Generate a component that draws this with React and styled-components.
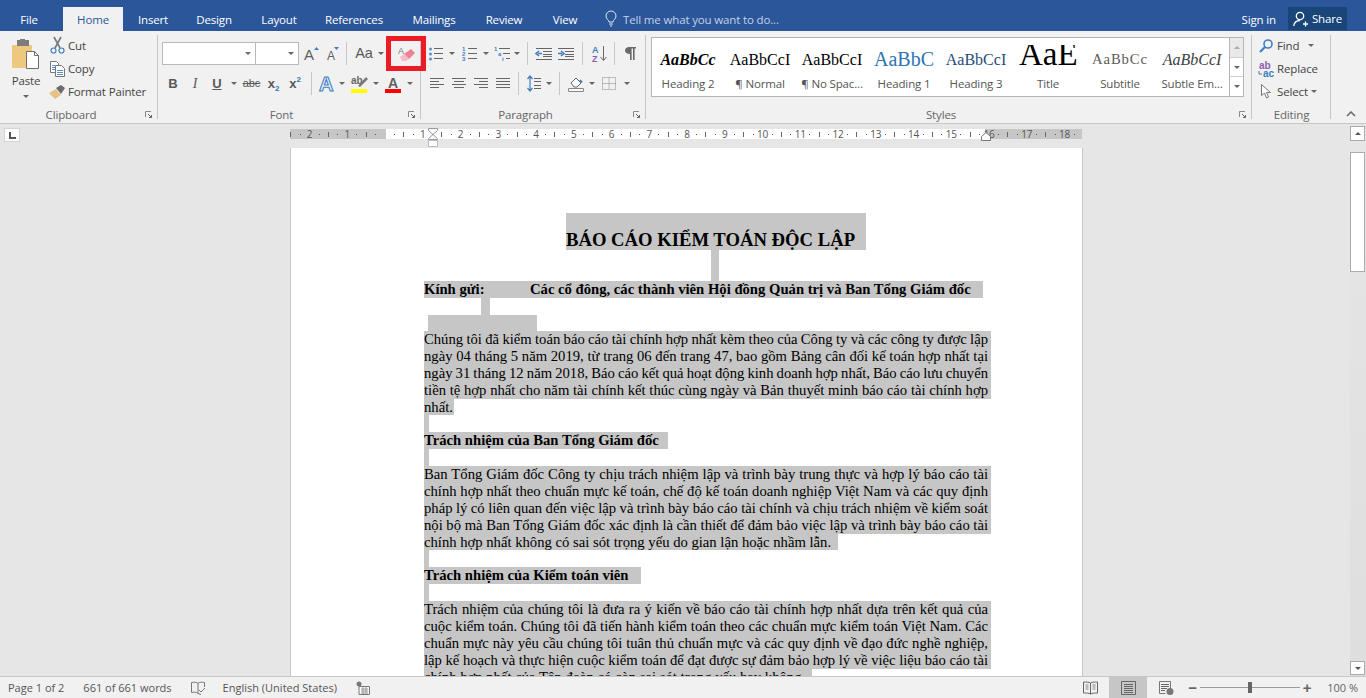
import React from 'react';
import styled, { createGlobalStyle } from 'styled-components';

const GlobalStyle = createGlobalStyle`
  html, body { margin: 0; height: 100%; overflow: hidden; }
  #root { height: 100%; }
  * { box-sizing: border-box; }
`;

const UI_FONT = '"Open Sans", "Noto Sans", sans-serif';
const DOC_FONT = '"Liberation Serif", "Times New Roman", serif';

const Shell = styled.div`
  height: 698px;
  display: flex;
  flex-direction: column;
  font-family: ${UI_FONT};
  font-size: 11.5px;
  letter-spacing: -0.15px;
  color: #444;
  background: #e6e6e6;
  overflow: hidden;
`;

/* title bar */
const TitleBar = styled.div`
  height: 31px;
  flex: none;
  background: #2b579a;
  display: flex;
  align-items: flex-end;
  color: #fff;
`;
const Tab = styled.div`
  width: ${p => p.$w}px;
  height: 24px;
  display: flex;
  align-items: center;
  justify-content: center;
  background: ${p => (p.$active ? '#f1f1f1' : 'transparent')};
  color: ${p => (p.$active ? '#2b579a' : '#fff')};
`;
const TellMe = styled.div`
  margin-left: 10px;
  height: 24px;
  display: flex;
  align-items: center;
  gap: 6px;
  color: #c3d0e4;
`;
const AccountArea = styled.div`
  margin-left: auto;
  margin-right: 19px;
  display: flex;
  align-items: center;
  gap: 12px;
  height: 24px;
`;
const ShareButton = styled.div`
  width: 59px;
  height: 23px;
  background: #1a4578;
  display: flex;
  align-items: center;
  justify-content: center;
  gap: 4px;
  margin-bottom: 1px;
`;

/* ribbon */
const Ribbon = styled.div`
  height: 93px;
  flex: none;
  background: #f1f1f1;
  border-bottom: 1px solid #c6c6c6;
  padding-top: 4px;
  display: flex;
  position: relative;
`;
const Group = styled.div`
  width: ${p => p.$w}px;
  height: 88px;
  flex: none;
  position: relative;
  display: flex;
  flex-direction: column;
  &::after {
    content: '';
    position: absolute;
    right: 0;
    top: 0;
    bottom: 4px;
    width: 1px;
    background: #c6c6c6;
  }
`;
const GroupBody = styled.div`
  flex: 1;
  min-height: 0;
  display: flex;
`;
const GroupLabel = styled.div`
  height: 16px;
  line-height: 16px;
  text-align: center;
  color: #666;
  padding-right: ${p => p.$pr || 0}px;
  flex: none;
`;
const Launcher = styled.svg`
  position: absolute;
  right: 6px;
  bottom: 5px;
`;

const PasteButton = styled.div`
  width: 46px;
  margin-left: 3px;
  display: flex;
  flex-direction: column;
  align-items: center;
  padding-top: 4px;
`;
const PasteLabel = styled.div`
  margin: 4px 0 6px;
  line-height: 16px;
`;
const SmallColumn = styled.div`
  display: flex;
  flex-direction: column;
  margin-top: -1px;
  margin-left: ${p => p.$ml || 0}px;
`;
const SmallAction = styled.div`
  height: 23px;
  display: flex;
  align-items: center;
  gap: 3px;
  white-space: nowrap;
`;
const IconSlot = styled.span`
  width: ${p => p.$w || 16}px;
  display: inline-flex;
  justify-content: center;
  flex: none;
`;

const Rows = styled.div`
  padding: 7px 0 0 ${p => p.$pl || 0}px;
  display: flex;
  flex-direction: column;
  gap: 7px;
`;
const ToolRow = styled.div`
  height: 23px;
  display: flex;
  align-items: center;
`;
const Tool = styled.div`
  width: ${p => p.$w}px;
  height: 23px;
  flex: none;
  display: flex;
  align-items: center;
  justify-content: center;
  color: #555;
`;
const Glyph = styled.span`
  font-size: ${p => p.$size || 13}px;
  font-weight: ${p => (p.$bold ? 700 : 400)};
  font-style: ${p => (p.$italic ? 'italic' : 'normal')};
  text-decoration: ${p => p.$deco || 'none'};
  font-family: ${p => (p.$serif ? DOC_FONT : '"Liberation Sans", sans-serif')};
  letter-spacing: 0;
  color: #595959;
  line-height: 1;
`;
const Sub = styled.sub`
  font-size: 8px;
  font-weight: 700;
  color: #2f75b5;
  vertical-align: ${p => (p.$up ? '6px' : '-3px')};
  line-height: 0;
`;
const Caret = styled.span`
  width: 0;
  height: 0;
  display: inline-block;
  flex: none;
  border-left: 3px solid transparent;
  border-right: 3px solid transparent;
  border-top: 3px solid ${p => p.$color || '#666'};
  transform: ${p => (p.$up ? 'rotate(180deg)' : 'none')};
`;
const Divider = styled.span`
  width: 1px;
  height: 23px;
  flex: none;
  background: #c6c6c6;
  margin: 0 ${p => p.$m || 5}px;
`;
const ComboBox = styled.div`
  width: ${p => p.$w}px;
  height: 23px;
  flex: none;
  background: #fff;
  border: 1px solid #b9b9b9;
  border-left-width: ${p => (p.$joined ? 0 : 1)}px;
  display: flex;
  align-items: center;
  justify-content: flex-end;
  padding-right: 4px;
`;
const MarkedTool = styled.div`
  width: 30px;
  height: 25px;
  flex: none;
  margin-left: 7px;
  display: flex;
  align-items: center;
  justify-content: center;
  outline: 5px solid #ed1c24;
  position: relative;
  z-index: 2;
`;

/* style gallery */
const Gallery = styled.div`
  margin: 2px 0 0 5px;
  width: 593px;
  height: 60px;
  background: #fff;
  border: 1px solid #b5b5b5;
  display: flex;
`;
const StyleItem = styled.div`
  width: 72px;
  flex: none;
  display: flex;
  flex-direction: column;
  align-items: center;
  overflow: hidden;
`;
const StylePreview = styled.div`
  width: 64px;
  height: 37px;
  display: flex;
  align-items: center;
  justify-content: center;
  overflow: hidden;
  white-space: nowrap;
  padding-top: 6px;
  font-family: ${DOC_FONT};
  font-size: ${p => p.$size || 16}px;
  font-weight: ${p => (p.$bold ? 700 : 400)};
  font-style: ${p => (p.$italic ? 'italic' : 'normal')};
  letter-spacing: ${p => p.$ls || 0}px;
  color: ${p => p.$color || '#000'};
`;
/* the Title sample is taller than the row, the gallery cuts it off at the top */
const ClippedPreview = styled(StylePreview)`
  width: 58px;
  height: 21px;
  margin: 7px 0 9px;
  padding-top: 0;
  line-height: 18px;
  align-items: flex-start;
  justify-content: flex-start;
`;
const StyleName = styled.div`
  line-height: 17px;
  color: #555;
  white-space: nowrap;
`;
const GalleryScroll = styled.div`
  margin-left: auto;
  width: 14px;
  border-left: 1px solid #b5b5b5;
  display: flex;
  flex-direction: column;
`;
const ScrollCell = styled.div`
  flex: 1;
  display: flex;
  align-items: center;
  justify-content: center;
  border-top: ${p => (p.$first ? 0 : 1)}px solid #d0d0d0;
  background: ${p => (p.$first ? '#e9e9e9' : '#fff')};
`;
const CollapseChevron = styled.svg`
  position: absolute;
  left: 1346px;
  top: 80px;
`;

/* workspace */
const Workspace = styled.div`
  flex: 1;
  min-height: 0;
  display: flex;
`;
const Canvas = styled.div`
  flex: 1;
  min-width: 0;
  display: flex;
  flex-direction: column;
`;
const RulerRow = styled.div`
  height: 24px;
  flex: none;
  display: grid;
  grid-template-columns: 290px 792px;
  padding-top: 5px;
`;
const RulerCorner = styled.div`
  width: 16px;
  height: 14px;
  margin: -1px 0 0 4px;
  background: #fff;
  border: 1px solid #d4d4d4;
  display: flex;
  align-items: center;
  justify-content: center;
`;
const Ruler = styled.div`
  height: 10px;
  position: relative;
  background: linear-gradient(to right, #c6c6c6 96px, #fff 96px, #fff 695px, #c6c6c6 695px);
`;
const RulerStrip = styled.div`
  display: flex;
  height: 10px;
  margin-left: -4px;
`;
const RulerSlot = styled.span`
  width: 9.45px;
  height: 10px;
  flex: none;
  display: flex;
  align-items: center;
  justify-content: center;
  font-size: 10px;
  line-height: 10px;
  letter-spacing: 0;
  color: #555;
`;
const RulerDot = styled.i`
  width: 1px;
  height: 1px;
  background: #555;
`;
const RulerTick = styled.i`
  width: 1px;
  height: 5px;
  background: #666;
`;
const IndentMarker = styled.svg`
  position: absolute;
  left: ${p => p.$x}px;
  top: -1px;
`;

const PageArea = styled.div`
  flex: 1;
  min-height: 0;
  padding-left: 290px;
  overflow: hidden;
`;
const Page = styled.div`
  width: 793px;
  height: 100%;
  background: #fff;
  border-left: 1px solid #c6c6c6;
  border-right: 1px solid #c6c6c6;
  padding: 65px 0 0 133px;
  font-family: ${DOC_FONT};
  font-size: 14.67px;
  letter-spacing: 0;
  color: #000;
  overflow: hidden;
`;
const DocTitle = styled.div`
  margin-left: 142px;
  width: 300px;
  height: 37px;
  background: #c6c6c6;
  font-size: 18.67px;
  font-weight: 700;
  line-height: 20px;
  white-space: nowrap;
  padding-top: 17px;
`;
const Stub = styled.div`
  margin-left: ${p => p.$x || 0}px;
  width: ${p => p.$w}px;
  height: ${p => p.$h || 16.875}px;
  background: #c6c6c6;
`;
const Line = styled.div`
  width: ${p => p.$w || 567}px;
  height: 16.875px;
  line-height: 16.875px;
  background: #c6c6c6;
  font-weight: ${p => (p.$bold ? 700 : 400)};
  white-space: nowrap;
  text-align: ${p => (p.$justify ? 'justify' : 'left')};
  text-align-last: ${p => (p.$justify ? 'justify' : 'left')};
  word-spacing: ${p => (p.$justify ? -1 : 0)}px;
  padding-right: ${p => (p.$justify ? 3 : 0)}px;
`;
const TabbedLabel = styled.span`
  display: inline-block;
  width: 106px;
`;

/* scrollbar */
const ScrollBar = styled.div`
  width: 16px;
  flex: none;
  padding: 2px 1px 1px 0;
  display: flex;
  flex-direction: column;
  background: linear-gradient(#e6e6e6, #dedede);
`;
const ScrollButton = styled.div`
  height: ${p => p.$h}px;
  margin-top: ${p => (p.$bottom ? 'auto' : '0')};
  flex: none;
  background: #fff;
  border: 1px solid #ababab;
  display: flex;
  align-items: center;
  justify-content: center;
`;
const ScrollThumb = styled.div`
  margin-top: 11px;
  height: 120px;
  flex: none;
  background: #fff;
  border: 1px solid #ababab;
`;

/* status bar */
const StatusBar = styled.div`
  height: 22px;
  flex: none;
  background: #f1f1f1;
  border-top: 1px solid #c6c6c6;
  display: flex;
  align-items: center;
  font-size: 11px;
  letter-spacing: 0;
  color: #555;
  padding-left: 8px;
`;
const StatusText = styled.span`
  margin-left: ${p => p.$ml || 0}px;
  white-space: nowrap;
`;
const StatusIcon = styled.span`
  margin-left: ${p => p.$ml || 0}px;
  display: inline-flex;
`;
const ViewButton = styled.div`
  width: 38px;
  height: 21px;
  display: flex;
  align-items: center;
  justify-content: center;
  background: ${p => (p.$active ? '#c6c6c6' : 'transparent')};
  margin-left: ${p => (p.$first ? 'auto' : 0)};
`;
const ZoomSlider = styled.div`
  width: 100px;
  height: 1px;
  background: #999;
  position: relative;
`;
const ZoomThumb = styled.i`
  position: absolute;
  left: 48px;
  top: -5px;
  width: 4px;
  height: 11px;
  background: #666;
`;
const ZoomSign = styled.span`
  font-family: "Liberation Sans", sans-serif;
  font-weight: 700;
  font-size: 15px;
  line-height: 1;
  color: #666;
  width: ${p => p.$w}px;
  text-align: center;
  flex: none;
`;
const ZoomValue = styled.span`
  margin: 0 8px 0 13px;
  color: #666;
`;

/* icons */
const Ico = ({ w, h, children }) => (
  <svg width={w} height={h} viewBox={`0 0 ${w} ${h}`} fill="none" style={{ display: 'block', overflow: 'visible' }}>
    {children}
  </svg>
);
const Rules = ({ rows, color = '#666' }) => (
  <>
    {rows.map(([x1, x2, y], i) => (
      <path key={i} d={`M${x1} ${y + 0.5}H${x2}`} stroke={color} shapeRendering="crispEdges" />
    ))}
  </>
);
const iconText = { fontFamily: '"Liberation Sans", sans-serif', letterSpacing: 0 };

const IconPaste = () => (
  <Ico w={30} h={30}>
    <path d="M1 6h20v23H1z" fill="#edc87e" />
    <path d="M6 1h3V0h5v1h4v6H6z" fill="#7d7d7d" />
    <path d="M15.500 12.500h8l4 4v13h-12z" fill="#fff" stroke="#6d6d6d" />
    <path d="M23.500 12.500v4h4" stroke="#6d6d6d" />
  </Ico>
);
const IconCut = () => (
  <Ico w={15} h={17}>
    <path d="M4 0l6 11M11 0L5 11" stroke="#777" strokeWidth="1.600" />
    <circle cx="3.500" cy="13.500" r="2.500" stroke="#3f7fc1" strokeWidth="1.200" />
    <circle cx="11.500" cy="13.500" r="2.500" stroke="#3f7fc1" strokeWidth="1.200" />
  </Ico>
);
const IconCopy = () => (
  <Ico w={15} h={16}>
    <path d="M.5.5h6l2 2v9h-8z" fill="#fff" stroke="#777" />
    <path d="M5.500 4.500h6l3 3v8h-9z" fill="#fff" stroke="#777" />
    <Rules rows={[[2, 5, 4], [2, 5, 6], [2, 5, 8], [7, 13, 9], [7, 13, 11], [7, 13, 13]]} color="#5b8fc7" />
  </Ico>
);
const IconBrush = () => (
  <Ico w={16} h={14}>
    <path d="M0 8l7-4 5 6-6 4c-2-2-4-4-6-6z" fill="#e7c288" />
    <path d="M7 3l5-3 4 3-4 6z" fill="#6b6b6b" />
  </Ico>
);
const IconGrowFont = ({ small }) => (
  <Ico w={15} h={17}>
    <text x={small ? 1 : 0} y="15" fontSize={small ? 12 : 15} fill="#5f5f5f" style={iconText}>A</text>
    <path d={small ? 'M8 2h5l-2.500 3z' : 'M10 5h5l-2.500-3z'} fill="#3f7fc1" />
  </Ico>
);
const IconEraser = () => (
  <Ico w={17} h={15}>
    <text x="0" y="8" fontSize="9" fill="#777" style={iconText}>A</text>
    <path d="M6 8l7-5 4 4-6 6z" fill="#ec8494" />
    <path d="M2 11l4-3 5 5-3 2H4z" fill="#f5bcc5" />
  </Ico>
);
const IconTextEffect = () => (
  <Ico w={16} h={17}>
    <text x="0" y="16" fontSize="20" fontWeight="700" fill="#f4f8fc" stroke="#3f7fc1" strokeWidth="1.100" style={iconText}>A</text>
  </Ico>
);
const IconHighlight = () => (
  <Ico w={17} h={18}>
    <text x="0" y="9" fontSize="10" fontWeight="700" fill="#666" style={iconText}>ab</text>
    <path d="M7 11l8-9 2 2-8 8z" fill="#777" />
    <path d="M0 14h16v4H0z" fill="#ff0" />
  </Ico>
);
const IconFontColor = () => (
  <Ico w={16} h={18}>
    <text x="3" y="13" fontSize="14" fontWeight="700" fill="#5f5f5f" style={iconText}>A</text>
    <path d="M0 14h16v4H0z" fill="#f00" />
  </Ico>
);
const dots = (ys, x = 1.5) => ys.map(y => <circle key={y} cx={x} cy={y} r="1.500" fill="#5b8fc7" />);
const IconBullets = () => (
  <Ico w={14} h={14}>
    {dots([2, 7, 12])}
    <Rules rows={[[5, 14, 1], [5, 14, 6], [5, 14, 11]]} />
  </Ico>
);
const IconNumbers = () => (
  <Ico w={15} h={15}>
    <text x="0" y="5" fontSize="6" fontWeight="700" fill="#3f7fc1" style={iconText}>1</text>
    <text x="0" y="10" fontSize="6" fontWeight="700" fill="#3f7fc1" style={iconText}>2</text>
    <text x="0" y="15" fontSize="6" fontWeight="700" fill="#3f7fc1" style={iconText}>3</text>
    <Rules rows={[[6, 15, 2], [6, 15, 7], [6, 15, 12]]} />
  </Ico>
);
const IconMultilevel = () => (
  <Ico w={16} h={15}>
    <text x="0" y="5" fontSize="6" fontWeight="700" fill="#3f7fc1" style={iconText}>1</text>
    <text x="4" y="10" fontSize="6" fontWeight="700" fill="#3f7fc1" style={iconText}>a</text>
    <text x="8" y="15" fontSize="6" fontWeight="700" fill="#3f7fc1" style={iconText}>i</text>
    <Rules rows={[[5, 16, 2], [9, 16, 7], [12, 16, 12]]} />
  </Ico>
);
const IconIndent = ({ grow }) => (
  <Ico w={16} h={12}>
    <Rules rows={[[0, 16, 0], [7, 16, 3], [7, 16, 6], [7, 16, 8], [0, 16, 11]]} />
    <path d={grow ? 'M0 5.500h4M3 3l3 2.500L3 8' : 'M6 5.500H2M3 3L0 5.500 3 8'} stroke="#3f7fc1" strokeWidth="1.600" />
  </Ico>
);
const IconSort = () => (
  <Ico w={15} h={17}>
    <text x="0" y="8" fontSize="9" fontWeight="700" fill="#3f7fc1" style={iconText}>A</text>
    <text x="0" y="17" fontSize="9" fontWeight="700" fill="#8a5fb5" style={iconText}>Z</text>
    <path d="M11.500 1v14M8.500 12l3 3.500 3-3.500" stroke="#666" />
  </Ico>
);
const IconPilcrow = () => (
  <Ico w={11} h={13}>
    <path d="M4 0h7v1.600H9.600V13H8V1.600H6.600V13H5V7C2 7 0 5.500 0 3.500S2 0 4 0z" fill="#6a6a6a" />
  </Ico>
);
const IconAlign = ({ rows }) => (
  <Ico w={14} h={11}>
    <Rules rows={rows} />
  </Ico>
);
const IconLineSpacing = () => (
  <Ico w={14} h={15}>
    <path d="M3 0v15M.5 3L3 0l2.500 3M.5 12L3 15l2.500-3" stroke="#3f7fc1" strokeWidth="1.200" />
    <Rules rows={[[7, 14, 2], [7, 14, 5], [7, 14, 9], [7, 14, 12]]} />
  </Ico>
);
const IconShade = () => (
  <Ico w={16} h={16}>
    <path d="M3 7l5-5 5 5-4 4H6z" fill="#fff" stroke="#666" />
    <path d="M12 4l2 2.500" stroke="#3f7fc1" strokeWidth="2" />
    <path d="M.5 12.500h15v3H.5z" fill="#fff" stroke="#888" />
  </Ico>
);
const IconBorders = () => (
  <Ico w={14} h={13}>
    <path d="M.5.5h13v12H.5zM7 .5v12M.5 6.500h13" stroke="#888" strokeDasharray="1 1" />
  </Ico>
);
const IconFind = () => (
  <Ico w={14} h={14}>
    <circle cx="9" cy="5" r="4" stroke="#3f7fc1" strokeWidth="1.600" />
    <path d="M6 8l-5 5" stroke="#3f7fc1" strokeWidth="2.200" />
  </Ico>
);
const IconReplace = () => (
  <Ico w={16} h={16}>
    <text x="1" y="8" fontSize="10" fontWeight="700" fill="#8a5fb5" style={iconText}>ab</text>
    <text x="5" y="16" fontSize="10" fontWeight="700" fill="#3f7fc1" style={iconText}>ac</text>
    <path d="M1 10v3h3" stroke="#3f7fc1" />
  </Ico>
);
const IconCursor = () => (
  <Ico w={10} h={15}>
    <path d="M.5.500v11l3-2.500 2 5 2-1-2-4.500H9.500z" fill="#fff" stroke="#777" />
  </Ico>
);
const IconBulb = () => (
  <Ico w={12} h={16}>
    <path d="M4 11c0-2-3-3-3-6a5 5 0 0 1 10 0c0 3-3 4-3 6z" stroke="#dfe6f0" />
    <path d="M4 13h4M5 15h2" stroke="#dfe6f0" />
  </Ico>
);
const IconShare = () => (
  <Ico w={15} h={16}>
    <circle cx="7" cy="5" r="3.700" stroke="#fff" strokeWidth="1.300" />
    <path d="M.7 15c.5-3.500 2.500-5.500 6.300-5.500M10 13h5M12.500 10.500v5" stroke="#fff" strokeWidth="1.300" />
  </Ico>
);
const IconLauncher = () => (
  <Launcher width="7" height="7" viewBox="0 0 7 7" fill="none">
    <path d="M.5 6V.5H6" stroke="#888" />
    <path d="M3 3l3.500 3.500M6.500 4v2.500H4" stroke="#666" />
  </Launcher>
);

const AlignLeft = [[0, 14, 0], [0, 9, 3], [0, 14, 6], [0, 9, 9]];
const AlignCenter = [[0, 14, 0], [2, 12, 3], [0, 14, 6], [2, 12, 9]];
const AlignRight = [[0, 14, 0], [5, 14, 3], [0, 14, 6], [5, 14, 9]];
const AlignFull = [[0, 14, 0], [0, 14, 3], [0, 14, 6], [0, 14, 9]];

const tabs = [
  ['Insert', 60], ['Design', 62], ['Layout', 68], ['References', 82],
  ['Mailings', 78], ['Review', 62], ['View', 60],
];

const styleItems = [
  { name: 'Heading 2', text: 'AaBbCc', bold: true, italic: true },
  { name: '¶ Normal', text: 'AaBbCcI' },
  { name: '¶ No Spac...', text: 'AaBbCcI' },
  { name: 'Heading 1', text: 'AaBbC', size: 20, color: '#2e74b5' },
  { name: 'Heading 3', text: 'AaBbCcI', color: '#1f4d78' },
  { name: 'Title', text: 'AaE', size: 33, clipped: true },
  { name: 'Subtitle', text: 'AaBbCc', size: 14.7, color: '#5a5a5a', ls: 0.9 },
  { name: 'Subtle Em...', text: 'AaBbCcI', italic: true, color: '#404040' },
];

const rulerSlots = [];
for (let q = -10; q <= 73; q++) rulerSlots.push(q);

const RulerMark = ({ q }) => {
  const abs = Math.abs(q);
  if (q === 0) return <RulerSlot />;
  if (abs % 4 === 0) return <RulerSlot>{abs / 4}</RulerSlot>;
  if (abs % 4 === 2) return <RulerSlot><RulerTick /></RulerSlot>;
  return <RulerSlot><RulerDot /></RulerSlot>;
};

const para1 = [
  'Chúng tôi đã kiểm toán báo cáo tài chính hợp nhất kèm theo của Công ty và các công ty được lập',
  'ngày 04 tháng 5 năm 2019, từ trang 06 đến trang 47, bao gồm Bảng cân đối kế toán hợp nhất tại',
  'ngày 31 tháng 12 năm 2018, Báo cáo kết quả hoạt động kinh doanh hợp nhất, Báo cáo lưu chuyển',
  'tiền tệ hợp nhất cho năm tài chính kết thúc cùng ngày và Bản thuyết minh báo cáo tài chính hợp',
];
const para2 = [
  'Ban Tổng Giám đốc Công ty chịu trách nhiệm lập và trình bày trung thực và hợp lý báo cáo tài',
  'chính hợp nhất theo chuẩn mực kế toán, chế độ kế toán doanh nghiệp Việt Nam và các quy định',
  'pháp lý có liên quan đến việc lập và trình bày báo cáo tài chính và chịu trách nhiệm về kiểm soát',
  'nội bộ mà Ban Tổng Giám đốc xác định là cần thiết để đảm bảo việc lập và trình bày báo cáo tài',
];
const para3 = [
  'Trách nhiệm của chúng tôi là đưa ra ý kiến về báo cáo tài chính hợp nhất dựa trên kết quả của',
  'cuộc kiểm toán. Chúng tôi đã tiến hành kiểm toán theo các chuẩn mực kiểm toán Việt Nam. Các',
  'chuẩn mực này yêu cầu chúng tôi tuân thủ chuẩn mực và các quy định về đạo đức nghề nghiệp,',
  'lập kế hoạch và thực hiện cuộc kiểm toán để đạt được sự đảm bảo hợp lý về việc liệu báo cáo tài',
];

export default function App() {
  return (
    <Shell>
      <GlobalStyle />
      <TitleBar>
        <Tab $w={58}>File</Tab>
        <Tab $w={5} />
        <Tab $w={60} $active>Home</Tab>
        {tabs.map(([label, w]) => <Tab key={label} $w={w}>{label}</Tab>)}
        <TellMe><IconBulb />Tell me what you want to do...</TellMe>
        <AccountArea>
          <span>Sign in</span>
          <ShareButton><IconShare />Share</ShareButton>
        </AccountArea>
      </TitleBar>

      <Ribbon>
        <Group $w={158}>
          <GroupBody>
            <PasteButton>
              <IconPaste />
              <PasteLabel>Paste</PasteLabel>
              <Caret />
            </PasteButton>
            <SmallColumn>
              <SmallAction><IconSlot><IconCut /></IconSlot>Cut</SmallAction>
              <SmallAction><IconSlot><IconCopy /></IconSlot>Copy</SmallAction>
              <SmallAction><IconSlot><IconBrush /></IconSlot>Format Painter</SmallAction>
            </SmallColumn>
          </GroupBody>
          <GroupLabel $pr={16}>Clipboard</GroupLabel>
          <IconLauncher />
        </Group>

        <Group $w={263}>
          <GroupBody>
            <Rows $pl={4}>
              <ToolRow>
                <ComboBox $w={94}><Caret /></ComboBox>
                <ComboBox $w={43} $joined><Caret /></ComboBox>
                <Tool $w={24}><IconGrowFont /></Tool>
                <Tool $w={20}><IconGrowFont small /></Tool>
                <Divider $m={3} />
                <Tool $w={28}><Glyph $size={14.5}>Aa</Glyph></Tool>
                <Caret />
                <MarkedTool><IconEraser /></MarkedTool>
              </ToolRow>
              <ToolRow>
                <Tool $w={22}><Glyph $bold>B</Glyph></Tool>
                <Tool $w={22}><Glyph $italic $serif $size={14}>I</Glyph></Tool>
                <Tool $w={22}><Glyph $bold $deco="underline">U</Glyph></Tool>
                <Tool $w={12}><Caret /></Tool>
                <Tool $w={23}><Glyph $size={11} $deco="line-through">abc</Glyph></Tool>
                <Tool $w={21}><Glyph $bold>x<Sub>2</Sub></Glyph></Tool>
                <Tool $w={22}><Glyph $bold>x<Sub $up>2</Sub></Glyph></Tool>
                <Divider $m={5} />
                <Tool $w={20}><IconTextEffect /></Tool>
                <Tool $w={10}><Caret /></Tool>
                <Tool $w={24}><IconHighlight /></Tool>
                <Tool $w={10}><Caret /></Tool>
                <Tool $w={23}><IconFontColor /></Tool>
                <Tool $w={12}><Caret /></Tool>
              </ToolRow>
            </Rows>
          </GroupBody>
          <GroupLabel $pr={16}>Font</GroupLabel>
          <IconLauncher />
        </Group>

        <Group $w={225}>
          <GroupBody>
            <Rows $pl={5}>
              <ToolRow>
                <Tool $w={20}><IconBullets /></Tool>
                <Tool $w={12}><Caret /></Tool>
                <Tool $w={22}><IconNumbers /></Tool>
                <Tool $w={12}><Caret /></Tool>
                <Tool $w={20}><IconMultilevel /></Tool>
                <Tool $w={10}><Caret /></Tool>
                <Divider $m={5} />
                <Tool $w={22}><IconIndent /></Tool>
                <Tool $w={22}><IconIndent grow /></Tool>
                <Divider $m={5} />
                <Tool $w={22}><IconSort /></Tool>
                <Divider $m={4} />
                <Tool $w={22}><IconPilcrow /></Tool>
              </ToolRow>
              <ToolRow>
                <Tool $w={22}><IconAlign rows={AlignLeft} /></Tool>
                <Tool $w={22}><IconAlign rows={AlignCenter} /></Tool>
                <Tool $w={22}><IconAlign rows={AlignRight} /></Tool>
                <Tool $w={22}><IconAlign rows={AlignFull} /></Tool>
                <Divider $m={4} />
                <Tool $w={21}><IconLineSpacing /></Tool>
                <Tool $w={10}><Caret /></Tool>
                <Divider $m={5} />
                <Tool $w={22}><IconShade /></Tool>
                <Tool $w={10}><Caret /></Tool>
                <Tool $w={24}><IconBorders /></Tool>
                <Tool $w={12}><Caret /></Tool>
              </ToolRow>
            </Rows>
          </GroupBody>
          <GroupLabel $pr={16}>Paragraph</GroupLabel>
          <IconLauncher />
        </Group>

        <Group $w={606}>
          <GroupBody>
            <Gallery>
              {styleItems.map(s => {
                const Preview = s.clipped ? ClippedPreview : StylePreview;
                return (
                  <StyleItem key={s.name}>
                    <Preview $size={s.size} $bold={s.bold} $italic={s.italic} $color={s.color} $ls={s.ls}>
                      {s.text}
                    </Preview>
                    <StyleName>{s.name}</StyleName>
                  </StyleItem>
                );
              })}
              <GalleryScroll>
                <ScrollCell $first><Caret $up $color="#aaa" /></ScrollCell>
                <ScrollCell><Caret /></ScrollCell>
                <ScrollCell><Caret /></ScrollCell>
              </GalleryScroll>
            </Gallery>
          </GroupBody>
          <GroupLabel $pr={16}>Styles</GroupLabel>
          <IconLauncher />
        </Group>

        <Group $w={79}>
          <GroupBody>
            <SmallColumn $ml={6}>
              <SmallAction><IconSlot><IconFind /></IconSlot>Find&nbsp;&nbsp;<Caret /></SmallAction>
              <SmallAction><IconSlot><IconReplace /></IconSlot>Replace</SmallAction>
              <SmallAction><IconSlot><IconCursor /></IconSlot>Select<Caret /></SmallAction>
            </SmallColumn>
          </GroupBody>
          <GroupLabel>Editing</GroupLabel>
        </Group>

        <CollapseChevron width="10" height="6" viewBox="0 0 10 6" fill="none">
          <path d="M1 5l4-4 4 4" stroke="#666" strokeWidth="1.500" />
        </CollapseChevron>
      </Ribbon>

      <Workspace>
        <Canvas>
          <RulerRow>
            <RulerCorner>
              <Ico w={7} h={7}><path d="M1 0v6h6" stroke="#555" strokeWidth="2" /></Ico>
            </RulerCorner>
            <Ruler>
              <RulerStrip>
                {rulerSlots.map(q => <RulerMark key={q} q={q} />)}
              </RulerStrip>
              <IndentMarker $x={138} width="10" height="20" viewBox="0 0 10 20" fill="none">
                <path d="M.5.500h9v2L5 6.500.5 2.500zM5 6.500l4.500 4v1h-9v-1z" fill="#fff" stroke="#999" />
                <path d="M.5 12.500h9v6h-9z" fill="#fff" stroke="#bbb" />
              </IndentMarker>
              <IndentMarker $x={691} width="10" height="14" viewBox="0 0 10 14" fill="none">
                <path d="M5 4.500l4.500 4v4h-9v-4z" fill="#fff" stroke="#777" />
              </IndentMarker>
            </Ruler>
          </RulerRow>
          <PageArea>
            <Page>
              <DocTitle>BÁO CÁO KIỂM TOÁN ĐỘC LẬP</DocTitle>
              <Stub $x={287} $w={8} $h={31} />
              <Line $bold $w={559}><TabbedLabel>Kính gửi:</TabbedLabel>Các cổ đông, các thành viên Hội đồng Quản trị và Ban Tổng Giám đốc</Line>
              <Stub $x={57} $w={9} />
              <Stub $x={4} $w={109} $h={16.25} />
              {para1.map(t => <Line key={t} $justify>{t}</Line>)}
              <Line $w={30}>nhất.</Line>
              <Stub $w={5} />
              <Line $bold $w={244}>Trách nhiệm của Ban Tổng Giám đốc</Line>
              <Stub $w={5} />
              {para2.map(t => <Line key={t} $justify>{t}</Line>)}
              <Line $w={414}>chính hợp nhất không có sai sót trọng yếu do gian lận hoặc nhầm lẫn.</Line>
              <Stub $w={5} />
              <Line $bold $w={217}>Trách nhiệm của Kiểm toán viên</Line>
              <Stub $w={5} />
              {para3.map(t => <Line key={t} $justify>{t}</Line>)}
              <Line $w={388}>chính hợp nhất của Tập đoàn có còn sai sót trọng yếu hay không.</Line>
            </Page>
          </PageArea>
        </Canvas>
        <ScrollBar>
          <ScrollButton $h={15}><Caret $up $color="#555" /></ScrollButton>
          <ScrollThumb />
          <ScrollButton $h={14} $bottom><Caret $color="#555" /></ScrollButton>
        </ScrollBar>
      </Workspace>

      <StatusBar>
        <StatusText>Page 1 of 2</StatusText>
        <StatusText $ml={19}>661 of 661 words</StatusText>
        <StatusIcon $ml={19}>
          <Ico w={14} h={14}>
            <path d="M7 2.500C6 1 3 1 .5 1.500v10c2.500-.5 5-.5 6.500 1V2.500zM7 2.500C8 1 11 1 13.500 1.500V6M7 12.500l3 1" stroke="#777" />
            <path d="M8 9l2 2 4-4" stroke="#777" />
          </Ico>
        </StatusIcon>
        <StatusText $ml={18}>English (United States)</StatusText>
        <StatusIcon $ml={19}>
          <Ico w={14} h={14}>
            <circle cx="3" cy="3" r="2.500" fill="#777" />
            <path d="M3 5.500h10.500v8H3z" fill="#fff" stroke="#777" />
            <path d="M5 8h7M5 10h7M5 12h7M7 6v7M10 6v7" stroke="#999" />
          </Ico>
        </StatusIcon>
        <ViewButton $first>
          <Ico w={15} h={14}>
            <path d="M7.500 2C6 1 3 1 .5 1v11c3 0 5 0 7 1 2-1 4-1 7-1V1c-2.500 0-5.500 0-7 1zM7.500 2v11" stroke="#666" />
            <path d="M2.500 4h3M2.500 6h3M2.500 8h3M9.500 4h3M9.500 6h3M9.500 8h3" stroke="#888" />
          </Ico>
        </ViewButton>
        <ViewButton $active>
          <Ico w={15} h={14}>
            <path d="M.5.500h14v13H.5z" fill="#c6c6c6" stroke="#666" />
            <Rules rows={[[3, 12, 3], [3, 12, 5], [3, 12, 7], [3, 12, 9], [3, 12, 11]]} />
          </Ico>
        </ViewButton>
        <ViewButton>
          <Ico w={15} h={14}>
            <path d="M.5.500h11v8M.5.500v12h6" stroke="#777" />
            <Rules rows={[[2, 10, 3], [2, 10, 5], [2, 8, 7], [2, 6, 9]]} />
            <circle cx="11" cy="10.500" r="3.500" fill="#777" />
          </Ico>
        </ViewButton>
        <ZoomSign $w={15}>−</ZoomSign>
        <ZoomSlider><ZoomThumb /></ZoomSlider>
        <ZoomSign $w={14}>+</ZoomSign>
        <ZoomValue>100 %</ZoomValue>
      </StatusBar>
    </Shell>
  );
}
